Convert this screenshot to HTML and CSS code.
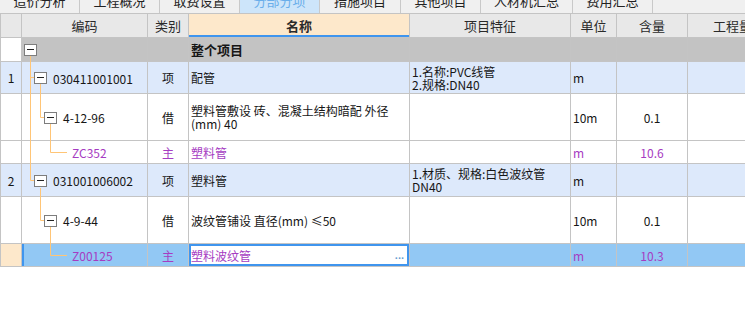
FILE: index.html
```html
<!DOCTYPE html>
<html lang="zh-CN">
<head>
  <meta charset="UTF-8">
  <title>分部分项</title>
  <link rel="stylesheet" href="styles.css">
</head>
<body>
  <div class="sheet">
    <div class="tabs">
      <div class="tab w79"><span>造价分析</span></div>
      <div class="tab w80"><span>工程概况</span></div>
      <div class="tab w80"><span>取费设置</span></div>
      <div class="tab w80 active"><span>分部分项</span></div>
      <div class="tab w81"><span>措施项目</span></div>
      <div class="tab w80"><span>其他项目</span></div>
      <div class="tab w92"><span>人材机汇总</span></div>
      <div class="tab w80"><span>费用汇总</span></div>
    </div>

    <div class="grid-wrap">
      <table class="grid">
        <colgroup>
          <col style="width:21px">
          <col style="width:126px">
          <col style="width:41px">
          <col style="width:221px">
          <col style="width:161px">
          <col style="width:46px">
          <col style="width:71px">
          <col style="width:100px">
        </colgroup>
        <thead>
          <tr class="h-head">
            <th></th>
            <th>编码</th>
            <th>类别</th>
            <th class="sorted">名称</th>
            <th>项目特征</th>
            <th>单位</th>
            <th>含量</th>
            <th class="last">工程量</th>
          </tr>
        </thead>
        <tbody>
          <tr class="h-24 root">
            <td class="num"></td>
            <td class="code lv0"><i class="fold"></i></td>
            <td></td>
            <td class="name">整个项目</td>
            <td></td><td></td><td></td><td></td>
          </tr>
          <tr class="h-32 item">
            <td class="num">1</td>
            <td class="code lv1"><i class="fold"></i><span>030411001001</span></td>
            <td class="cat">项</td>
            <td class="name">配管</td>
            <td class="feat">1.名称:PVC线管<br>2.规格:DN40</td>
            <td class="unit">m</td>
            <td></td><td></td>
          </tr>
          <tr class="h-47">
            <td class="num"></td>
            <td class="code lv2"><i class="fold"></i><span>4-12-96</span></td>
            <td class="cat">借</td>
            <td class="name">塑料管敷设 砖、混凝土结构暗配 外径<br>(mm) 40</td>
            <td></td>
            <td class="unit">10m</td>
            <td class="qty">0.1</td>
            <td></td>
          </tr>
          <tr class="h-23 main">
            <td class="num"></td>
            <td class="code lv3"><span>ZC352</span></td>
            <td class="cat">主</td>
            <td class="name">塑料管</td>
            <td></td>
            <td class="unit">m</td>
            <td class="qty">10.6</td>
            <td></td>
          </tr>
          <tr class="h-33 item">
            <td class="num">2</td>
            <td class="code lv1"><i class="fold"></i><span>031001006002</span></td>
            <td class="cat">项</td>
            <td class="name">塑料管</td>
            <td class="feat">1.材质、规格:白色波纹管<br>DN40</td>
            <td class="unit">m</td>
            <td></td><td></td>
          </tr>
          <tr class="h-47">
            <td class="num"></td>
            <td class="code lv2"><i class="fold"></i><span>4-9-44</span></td>
            <td class="cat">借</td>
            <td class="name">波纹管铺设 直径(mm) ≤50</td>
            <td></td>
            <td class="unit">10m</td>
            <td class="qty">0.1</td>
            <td></td>
          </tr>
          <tr class="h-23 main selected">
            <td class="num"></td>
            <td class="code lv3"><span>Z00125</span></td>
            <td class="cat">主</td>
            <td class="name editing"><div class="edit-box"><span>塑料波纹管</span><span class="more">...</span></div></td>
            <td></td>
            <td class="unit">m</td>
            <td class="qty">10.3</td>
            <td></td>
          </tr>
        </tbody>
      </table>
    </div>

    <!-- tree connector lines over the code column -->
    <svg class="tree-lines" width="745" height="332" viewBox="0 0 745 332">
      <g stroke="#ffc576" stroke-width="1" fill="none">
        <path d="M30.5 56 V180.5 H34"/>
        <path d="M30.5 77.5 H34"/>
        <path d="M40.5 84 V117.5 H44"/>
        <path d="M50.5 124 V152.5 H67"/>
        <path d="M40.5 188 V220.5 H44"/>
        <path d="M50.5 227 V255.5 H67"/>
      </g>
    </svg>
  </div>
</body>
</html>
```

FILE: styles.css
```css
body {
  margin: 0;
  background: #fff;
  font-family: "Noto Sans CJK SC", "Noto Sans", sans-serif;
  font-size: 12px;
  color: #161616;
}

.sheet {
  position: relative;
  width: 745px;
  height: 332px;
  overflow: hidden;
}

/* tab strip, scrolled so only the lower half shows */
.tabs {
  display: flex;
  height: 13px;
  background: #f0f0f0;
  overflow: hidden;
}

.tab {
  flex: none;
  box-sizing: border-box;
  height: 13px;
  border-right: 1px solid #c9c9c9;
  text-align: center;
  font-size: 13px;
  line-height: 13px;
  color: #222;
  overflow: hidden;
}

.tab span {
  display: block;
  margin-top: -6px;
}

.tab.active {
  background: #cde5fa;
  color: #6aaeea;
}

.w79 { width: 80px; }
.w80 { width: 80px; }
.w81 { width: 81px; }
.w92 { width: 92px; }

.grid-wrap {
  width: 745px;
  overflow: hidden;
}

.grid {
  table-layout: fixed;
  border-collapse: collapse;
  width: 787px;
}

.grid th,
.grid td {
  border: 1px solid #c4c4c4;
  padding: 0;
  vertical-align: middle;
  white-space: nowrap;
  overflow: hidden;
}

.grid th {
  height: 23px;
  background: #e8e8e8;
  font-weight: normal;
  font-size: 13px;
  color: #2a2a2a;
  text-align: center;
}

.grid th.sorted {
  background: #fde8cb;
  font-weight: bold;
  box-shadow: inset 0 -2px 0 #3f95ee;
}

.grid th.last {
  text-align: left;
  padding-left: 25px;
}

.h-24 td { height: 23px; }
.h-32 td { height: 31px; }
.h-47 td { height: 46px; }
.h-23 td { height: 22px; }
.h-33 td { height: 32px; }

.root td {
  background: #c3c3c3;
}

.root td.num {
  background: #fff;
}

.root .name {
  font-weight: bold;
  font-size: 13px;
}

.item td {
  background: #dde9fb;
}

.main td {
  color: #a63cc2;
}

.num {
  text-align: center;
}

.code {
  line-height: 12px;
}

.code span {
  vertical-align: middle;
}

.lv0 { padding-left: 2px !important; }
.lv1 { padding-left: 12px !important; }
.lv2 { padding-left: 22px !important; }
.lv3 { padding-left: 50px !important; }

.fold {
  display: inline-block;
  vertical-align: middle;
  position: relative;
  box-sizing: border-box;
  width: 13px;
  height: 12px;
  border: 1px solid #7d7d7d;
  background: #fff;
  margin-right: 6px;
}

.fold::after {
  content: "";
  position: absolute;
  left: 2px;
  right: 2px;
  top: 4px;
  height: 1px;
  background: #222;
}

.cat {
  text-align: center;
}

.name {
  padding-left: 2px !important;
  line-height: 13px;
}

.feat {
  padding-left: 2px !important;
  line-height: 13px;
}

.unit {
  padding-left: 2px !important;
}

.qty {
  text-align: center;
}

/* selected row */
.selected td {
  background: #92c8f4;
}

.selected td.num {
  background: #fde8cb;
}

.selected td.code {
  box-shadow: inset 2px 0 0 #3f95ee;
}

.selected td.editing {
  background: #fff;
  box-shadow: inset 0 0 0 2px #3f95ee;
}

.edit-box {
  display: flex;
  justify-content: space-between;
  align-items: center;
  padding-right: 5px;
}

.edit-box .more {
  font-family: "Liberation Sans", sans-serif;
  font-weight: bold;
  font-size: 11px;
  line-height: 10px;
  color: #6a9fd2;
  letter-spacing: 0;
}

.tree-lines {
  position: absolute;
  left: 0;
  top: 0;
  pointer-events: none;
}
```
